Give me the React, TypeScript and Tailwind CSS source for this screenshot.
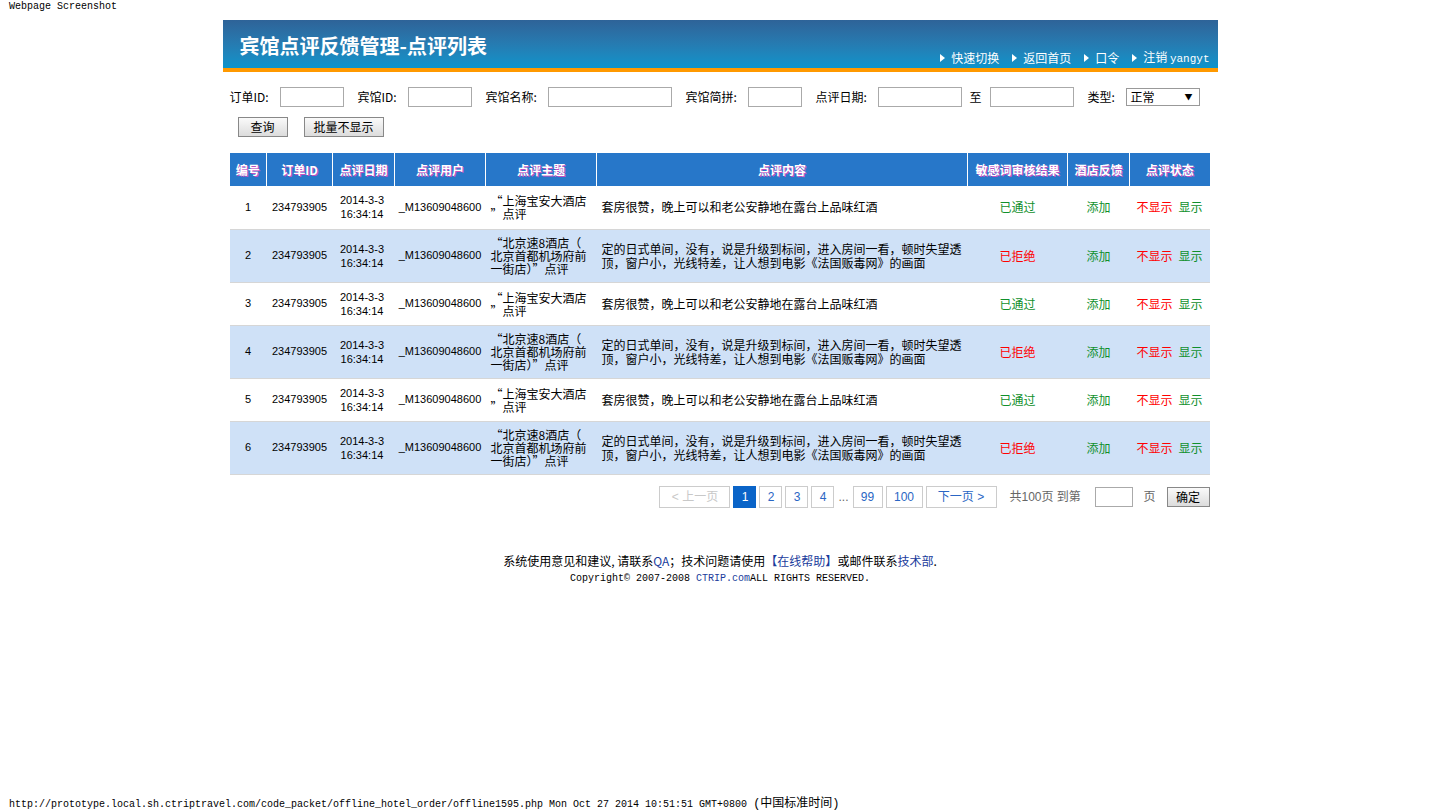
import React from "react";

type Review = {
  id: number;
  long: boolean;
};

const rows: Review[] = [
  { id: 1, long: false },
  { id: 2, long: true },
  { id: 3, long: false },
  { id: 4, long: true },
  { id: 5, long: false },
  { id: 6, long: true },
];

const cjk = "font-['SimSun','Noto_Sans_CJK_SC',sans-serif]";
const mono = "font-['Liberation_Mono','Noto_Sans_CJK_SC',monospace]";

function cn(...c: (string | false | undefined)[]) {
  return c.filter(Boolean).join(" ");
}

function NavLink({ label }: { label: React.ReactNode }) {
  return (
    <span className="flex items-center gap-[6px]">
      <svg width="5" height="8" viewBox="0 0 5 8" aria-hidden>
        <path d="M0 0 L5 4 L0 8 Z" fill="white" />
      </svg>
      {label}
    </span>
  );
}

function Field({ label, lw, width }: { label: string; lw: string; width: string }) {
  return (
    <div className="flex items-center">
      <span className={cn("shrink-0", lw)}>{label}</span>
      <input className={cn("h-[20px] border border-[#aaa] bg-white", width)} />
    </div>
  );
}

function PageBtn({
  children,
  w,
  active,
  disabled,
}: {
  children: React.ReactNode;
  w: string;
  active?: boolean;
  disabled?: boolean;
}) {
  return (
    <span
      className={cn(
        "flex h-[22px] items-center justify-center border text-[12px]",
        w,
        active
          ? "border-[#0a64c8] bg-[#0a64c8] text-white"
          : disabled
            ? "border-[#ccc] text-[#c8c8c8]"
            : "border-[#ccc] text-[#2a66c4]",
      )}
    >
      {children}
    </span>
  );
}

const buttonCls =
  "h-[20px] border border-[#888] bg-gradient-to-b from-[#fafafa] to-[#dcdcdc] text-[12px]";

export default function App() {
  const headers = [
    ["编号", "w-[37px]"],
    ["订单ID", "w-[66px]"],
    ["点评日期", "w-[62px]"],
    ["点评用户", "w-[91px]"],
    ["点评主题", "w-[111px]"],
    ["点评内容", "w-[371px]"],
    ["敏感词审核结果", "w-[100px]"],
    ["酒店反馈", "w-[62px]"],
    ["点评状态", "w-[80px]"],
  ];

  return (
    <div className={cn("flex min-h-[812px] flex-col bg-white text-[12px] text-black", cjk)}>
      <div className={cn("h-[20px] pl-[9px] pt-[1px] text-[10px] leading-[12px]", mono)}>
        Webpage Screenshot
      </div>

      <div className="mx-auto w-[995px]">
        {/* header bar */}
        <div className="flex h-[52px] items-start justify-between border-b-[4px] border-[#ff9900] bg-gradient-to-b from-[#2e6398] to-[#0a94cb] pl-[17px] pr-[8px]">
          <h1 className="pt-[13px] text-[20px] font-bold leading-[26px] text-white">
            宾馆点评反馈管理-点评列表
          </h1>
          <div className="flex items-center gap-[13px] pt-[29px] text-[12px] leading-[16px] text-white">
            <NavLink label="快速切换" />
            <NavLink label="返回首页" />
            <NavLink label="口令" />
            <NavLink
              label={
                <span>
                  注销 <span className={cn("text-[11px]", mono)}>yangyt</span>
                </span>
              }
            />
          </div>
        </div>

        {/* filters */}
        <div className="flex items-center gap-[14px] pl-[7px] pt-[15px]">
          <Field label="订单ID:" lw="w-[50px]" width="w-[64px]" />
          <Field label="宾馆ID:" lw="w-[50px]" width="w-[64px]" />
          <Field label="宾馆名称:" lw="w-[62px]" width="w-[124px]" />
          <Field label="宾馆简拼:" lw="w-[62px]" width="w-[54px]" />
          <Field label="点评日期:" lw="w-[62px]" width="w-[84px]" />
          <div className="-ml-[6px] flex items-center">
            <span className="w-[20px] shrink-0">至</span>
            <input className="h-[20px] w-[84px] border border-[#aaa] bg-white" />
          </div>
          <div className="flex items-center">
            <span className="w-[38px] shrink-0">类型:</span>
            <div className="flex h-[18px] w-[74px] items-center justify-between border border-[#999] pl-[4px] pr-[6px]">
              <span>正常</span>
              <span className="text-[8px]">▼</span>
            </div>
          </div>
        </div>

        <div className="flex gap-[16px] pl-[15px] pt-[10px]">
          <button className={cn(buttonCls, "w-[50px]")}>查询</button>
          <button className={cn(buttonCls, "w-[80px]")}>批量不显示</button>
        </div>

        {/* table */}
        <table className="ml-[7px] mt-[16px] w-[980px] border-collapse text-[12px]">
          <thead>
            <tr className="h-[33px] bg-[#2777c9]">
              {headers.map(([h, w]) => (
                <th
                  key={h}
                  className={cn(
                    "border-x border-white p-0 text-center font-bold text-white [text-shadow:1px_1px_0_#c050c0] first:border-l-0 last:border-r-0",
                    w,
                  )}
                >
                  {h}
                </th>
              ))}
            </tr>
          </thead>
          <tbody className="font-['Liberation_Sans','Noto_Sans_CJK_SC',sans-serif]">
            {rows.map((r) => {
              const theme = r.long
                ? ["“北京速8酒店（", "北京首都机场府前", "一街店）”点评"]
                : ["“上海宝安大酒店", "”点评"];
              return (
                <tr
                  key={r.id}
                  className={cn(
                    "border-b border-[#d6d6d6]",
                    r.long ? "h-[53px] bg-[#cfe1f7]" : "h-[43px] bg-white",
                  )}
                >
                  <td className="text-center text-[11px]">{r.id}</td>
                  <td className="text-center text-[11px]">234793905</td>
                  <td className="pr-[3px] text-center text-[11px] leading-[14px]">
                    2014-3-3
                    <br />
                    16:34:14
                  </td>
                  <td className="text-center text-[11px]">_M13609048600</td>
                  <td className={cn("pl-[5px] text-left whitespace-nowrap", cjk)}>
                    {theme.map((line) => (
                      <div key={line} className="h-[13px] overflow-visible leading-[13px]">
                        {line}
                      </div>
                    ))}
                  </td>
                  <td className={cn("pl-[5px] pr-[4px] leading-[14px]", cjk)}>
                    {r.long
                      ? "定的日式单间，没有，说是升级到标间，进入房间一看，顿时失望透顶，窗户小，光线特差，让人想到电影《法国贩毒网》的画面"
                      : "套房很赞，晚上可以和老公安静地在露台上品味红酒"}
                  </td>
                  <td className={cn("text-center", cjk, r.long ? "text-[#ff0000]" : "text-[#10902c]")}>
                    {r.long ? "已拒绝" : "已通过"}
                  </td>
                  <td className={cn("text-center text-[#10902c]", cjk)}>添加</td>
                  <td className={cn("text-center", cjk)}>
                    <span className="text-[#ff0000]">不显示</span>
                    <span className="ml-[6px] text-[#10902c]">显示</span>
                  </td>
                </tr>
              );
            })}
          </tbody>
        </table>

        {/* pagination */}
        <div className="flex items-center justify-end gap-[3px] pr-[8px] pt-[11px] font-['Liberation_Sans','Noto_Sans_CJK_SC',sans-serif]">
          <PageBtn w="w-[71px]" disabled>
            &lt; 上一页
          </PageBtn>
          <PageBtn w="w-[23px]" active>
            1
          </PageBtn>
          <PageBtn w="w-[23px]">2</PageBtn>
          <PageBtn w="w-[23px]">3</PageBtn>
          <PageBtn w="w-[23px]">4</PageBtn>
          <span className="px-[1px] text-[#666]">...</span>
          <PageBtn w="w-[30px]">99</PageBtn>
          <PageBtn w="w-[37px]">100</PageBtn>
          <PageBtn w="w-[71px]">下一页 &gt;</PageBtn>
          <span className="ml-[10px] w-[72px] text-[#666]">共100页 到第</span>
          <input className="ml-[10px] h-[20px] w-[38px] border border-[#aaa]" />
          <span className="ml-[8px] w-[12px] text-[#666]">页</span>
          <button className={cn(buttonCls, "ml-[8px] w-[43px]", cjk)}>确定</button>
        </div>

        {/* footer */}
        <div className="pt-[44px] text-center">
          <p className="leading-[18px]">
            系统使用意见和建议, 请联系<span className="text-[#1a3c9c]">QA</span>；技术问题请使用
            <span className="text-[#1a3c9c]">【在线帮助】</span>或邮件联系
            <span className="text-[#1a3c9c]">技术部</span>.
          </p>
          <p className={cn("text-[10px] leading-[18px]", mono)}>
            Copyright© 2007-2008 <span className="text-[#1a3c9c]">CTRIP.com</span>ALL RIGHTS RESERVED.
          </p>
        </div>
      </div>

      <div className={cn("mt-auto pb-[1px] pl-[9px] text-[10px] leading-[12px]", mono)}>
        http://prototype.local.sh.ctriptravel.com/code_packet/offline_hotel_order/offline1595.php Mon Oct 27 2014 10:51:51 GMT+0800{" "}
        <span className="text-[12px]">(中国标准时间)</span>
      </div>
    </div>
  );
}
